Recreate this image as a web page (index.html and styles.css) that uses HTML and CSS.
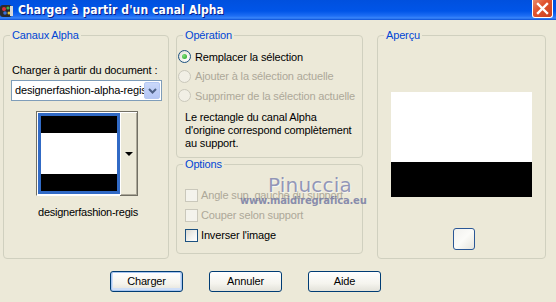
FILE: index.html
```html
<!DOCTYPE html>
<html lang="fr">
<head>
<meta charset="utf-8">
<title>Charger à partir d'un canal Alpha</title>
<link rel="stylesheet" href="styles.css">
</head>
<body>
<div class="window">
  <div class="titlebar">
    <svg class="app-icon" width="13" height="14" viewBox="0 0 13 14">
      <rect x="0" y="1" width="12" height="12" rx="3" fill="#2a2a2a"/>
      <circle cx="4" cy="5" r="2" fill="#d8303a"/>
      <circle cx="8" cy="4" r="1.6" fill="#3fb04a"/>
      <circle cx="5" cy="9" r="1.8" fill="#3a6fd8"/>
      <circle cx="9" cy="9" r="1.5" fill="#e0c23a"/>
      <rect x="10" y="2" width="3" height="10" fill="#d9d9d9"/>
    </svg>
    <span class="title">Charger à partir d'un canal Alpha</span>
    <div class="close">
      <svg width="13" height="13" viewBox="0 0 13 13"><path d="M2 2 L11 11 M11 2 L2 11" stroke="#fff" stroke-width="2.4" stroke-linecap="square"/></svg>
    </div>
  </div>

  <div class="content">
    <div class="panels">
      <fieldset class="group g-channels">
        <legend>Canaux Alpha</legend>
        <div class="doc-label">Charger à partir du document :</div>
        <div class="combo">
          <span class="combo-text">designerfashion-alpha-regis</span>
          <span class="combo-btn">
            <svg width="9" height="6" viewBox="0 0 9 6"><path d="M1 1 L4.5 4.5 L8 1" fill="none" stroke="#4d6185" stroke-width="2"/></svg>
          </span>
        </div>
        <div class="thumb">
          <div class="thumb-frame">
            <div class="thumb-img">
              <div class="bar-black"></div>
              <div class="bar-white"></div>
              <div class="bar-black"></div>
            </div>
          </div>
          <div class="thumb-btn"><span class="tri"></span></div>
        </div>
        <div class="thumb-label">designerfashion-regis</div>
      </fieldset>

      <div class="col-mid">
        <fieldset class="group g-operation">
          <legend>Opération</legend>
          <div class="opt-row"><span class="radio checked"><span class="dot"></span></span><span>Remplacer la sélection</span></div>
          <div class="opt-row disabled"><span class="radio"></span><span>Ajouter à la sélection actuelle</span></div>
          <div class="opt-row disabled"><span class="radio"></span><span>Supprimer de la sélection actuelle</span></div>
          <p class="note">Le rectangle du canal Alpha<br>d'origine correspond complètement<br>au support.</p>
        </fieldset>
        <fieldset class="group g-options">
          <legend>Options</legend>
          <div class="chk-row disabled"><span class="check"></span><span>Angle sup. gauche du support</span></div>
          <div class="chk-row disabled"><span class="check"></span><span>Couper selon support</span></div>
          <div class="chk-row"><span class="check enabled"></span><span>Inverser l'image</span></div>
        </fieldset>
      </div>

      <fieldset class="group g-preview">
        <legend>Aperçu</legend>
        <div class="preview">
          <div class="pv-white"></div>
          <div class="pv-black"></div>
        </div>
        <div class="small-btn"></div>
      </fieldset>
    </div>

    <div class="buttons">
      <div class="btn default">Charger</div>
      <div class="btn">Annuler</div>
      <div class="btn">Aide</div>
    </div>

    <div class="watermark">
      <div class="wm-name">Pinuccia</div>
      <div class="wm-url">www.maidiregrafica.eu</div>
    </div>
  </div>
</div>
</body>
</html>
```

FILE: styles.css
```css
* { box-sizing: border-box; }
html, body { margin: 0; padding: 0; }
body {
  width: 556px;
  height: 302px;
  overflow: hidden;
  background: #ECE9D8;
  font-family: "Liberation Sans", Arial, sans-serif;
  font-size: 11px;
  letter-spacing: -0.15px;
  color: #000;
}
.window { width: 556px; height: 302px; position: relative; }

.titlebar {
  height: 20px;
  display: flex;
  align-items: center;
  background: linear-gradient(#0050DE 0%, #0055E8 55%, #1E6EF4 80%, #3A86FA 90%, #0A4FD6 100%);
}
.app-icon { margin-left: 0; margin-top: 1px; }
.title {
  margin-left: 5px;
  color: #fff;
  font-family: "DejaVu Sans Condensed", "DejaVu Sans", sans-serif;
  font-weight: bold;
  font-size: 12px;
  letter-spacing: 0.1px;
  text-shadow: 1px 1px 0 #0A1E8A;
  line-height: 1;
  margin-top: -1px;
}
.close {
  margin-left: auto;
  margin-right: 3px;
  align-self: flex-start;
  width: 21px;
  height: 18px;
  border: 1px solid #fff;
  border-top: none;
  border-radius: 0 0 3px 3px;
  background: linear-gradient(135deg, #E98B6D 0%, #E0532F 40%, #C8401E 100%);
  display: flex;
  align-items: center;
  justify-content: center;
}

.content { position: relative; height: 282px; }
.panels {
  display: flex;
  padding: 9px 0 0 3px;
  height: 239px;
}

.group {
  margin: 0;
  padding: 0;
  border: 1px solid #D0D0BF;
  border-radius: 4px;
  min-width: 0;
}
.group legend {
  margin-left: 6px;
  padding: 0 2px;
  color: #0046D5;
  line-height: 13px;
  font-size: 11px;
}

.g-channels { width: 166px; height: 230px; }
.col-mid { width: 187px; margin-left: 7px; display: flex; flex-direction: column; }
.g-preview { width: 169px; height: 230px; margin-left: 14px; }

.doc-label { margin: 22px 0 0 8px; line-height: 13px; white-space: nowrap; }
.combo {
  margin: 3px 0 0 7px;
  width: 151px;
  height: 21px;
  border: 1px solid #7F9DB9;
  background: #fff;
  display: flex;
  align-items: center;
  overflow: hidden;
}
.combo-text { flex: 1; padding-left: 3px; white-space: nowrap; overflow: hidden; line-height: 13px; }
.combo-btn {
  width: 16px;
  height: 17px;
  margin-right: 1px;
  background: linear-gradient(#CAD8FA, #B4C6F4);
  border: 1px solid #B5C8F3;
  border-radius: 2px;
  display: flex;
  align-items: center;
  justify-content: center;
  flex: none;
}

.thumb {
  margin: 10px 0 0 32px;
  width: 102px;
  height: 85px;
  display: flex;
}
.thumb-frame {
  width: 84px;
  height: 85px;
  border-top: 1px solid #716F64;
  border-left: 1px solid #716F64;
  border-bottom: 1px solid #fff;
  padding: 1px 0 1px 1px;
  background: #fff;
}
.thumb-img {
  width: 82px;
  height: 81px;
  border: 3px solid #316AC5;
  display: flex;
  flex-direction: column;
}
.bar-black { height: 17px; background: #000; }
.bar-white { flex: 1; background: #fff; }
.thumb-btn {
  width: 18px;
  height: 85px;
  border-top: 1px solid #716F64;
  border-right: 1px solid #716F64;
  border-bottom: 1px solid #716F64;
  background: #ECE9D8;
  box-shadow: inset 1px 1px 0 #fff, inset -1px -1px 0 #ACA899;
  display: flex;
  align-items: center;
  justify-content: center;
}
.tri {
  width: 0; height: 0;
  border-left: 4px solid transparent;
  border-right: 4px solid transparent;
  border-top: 4px solid #000;
}
.thumb-label {
  margin: 10px 0 0 30px;
  width: 108px;
  text-align: center;
  line-height: 13px;
  white-space: nowrap;
  letter-spacing: -0.25px;
}

.g-operation { height: 129px; }
.opt-row, .chk-row {
  display: flex;
  align-items: center;
  white-space: nowrap;
}
.opt-row { height: 19.5px; margin-left: 1px; }
.opt-row:first-of-type { margin-top: 5px; }
.radio {
  width: 13px; height: 13px;
  border-radius: 50%;
  border: 1px solid #1C5180;
  background: radial-gradient(circle at 65% 65%, #fff 0%, #F0F0EA 50%, #D6D4C8 100%);
  margin-right: 4px;
  display: flex;
  align-items: center;
  justify-content: center;
  flex: none;
}
.dot {
  width: 5px; height: 5px;
  border-radius: 50%;
  background: radial-gradient(circle at 35% 35%, #7FE07A, #21A121);
}
.disabled { color: #ACA899; }
.opt-row.disabled .radio { border-color: #CAC8BB; background: #F1EFE5; }
.note { margin: 5px 0 0 8px; line-height: 13px; white-space: nowrap; }

.g-options { height: 96px; margin-top: 0; }
.chk-row { height: 20px; margin-left: 8px; }
.chk-row:first-of-type { margin-top: 14px; }
.check {
  width: 13px; height: 13px;
  border: 1px solid #CAC8BB;
  background: #F4F3EC;
  margin-right: 3px;
  flex: none;
}
.check.enabled {
  border-color: #1C5180;
  background: linear-gradient(135deg, #DCDBD3 0%, #F4F4F0 60%, #fff 100%);
}

.preview {
  margin: 50px 0 0 13px;
  width: 141px;
  height: 105px;
  display: flex;
  flex-direction: column;
}
.pv-white { height: 70px; background: #fff; }
.pv-black { flex: 1; background: #000; }
.small-btn {
  margin: 31px 0 0 75px;
  width: 22px;
  height: 22px;
  border: 1px solid #2A5796;
  border-radius: 3px;
  background: linear-gradient(135deg, #F2F2EE 0%, #FBFBF8 50%, #E6E5DD 100%);
}

.buttons {
  display: flex;
  gap: 26px;
  padding: 12px 0 0 110px;
}
.btn {
  width: 73px;
  height: 21px;
  border: 1px solid #003C74;
  border-radius: 3px;
  background: linear-gradient(#FFFFFF 0%, #F5F4EE 60%, #E3E2DA 100%);
  display: flex;
  align-items: center;
  justify-content: center;
  line-height: 13px;
}
.btn.default {
  box-shadow: inset 0 0 0 1px #A8C6F0, inset 0 -1px 0 2px #CFDFF8;
}

.watermark {
  position: absolute;
  left: 240px;
  top: 155px;
  width: 120px;
  pointer-events: none;
}
.wm-name {
  margin-left: 28px;
  font-family: "DejaVu Sans", sans-serif;
  font-size: 20px;
  line-height: 20px;
  letter-spacing: 0.2px;
  color: rgba(120, 126, 172, 0.78);
  text-shadow: 1px 1px 0 rgba(255,255,255,0.6);
}
.wm-url {
  font-family: "DejaVu Sans", sans-serif;
  font-size: 10px;
  line-height: 11px;
  font-weight: bold;
  color: rgba(110, 116, 160, 0.8);
  letter-spacing: -0.2px;
  white-space: nowrap;
}
```
